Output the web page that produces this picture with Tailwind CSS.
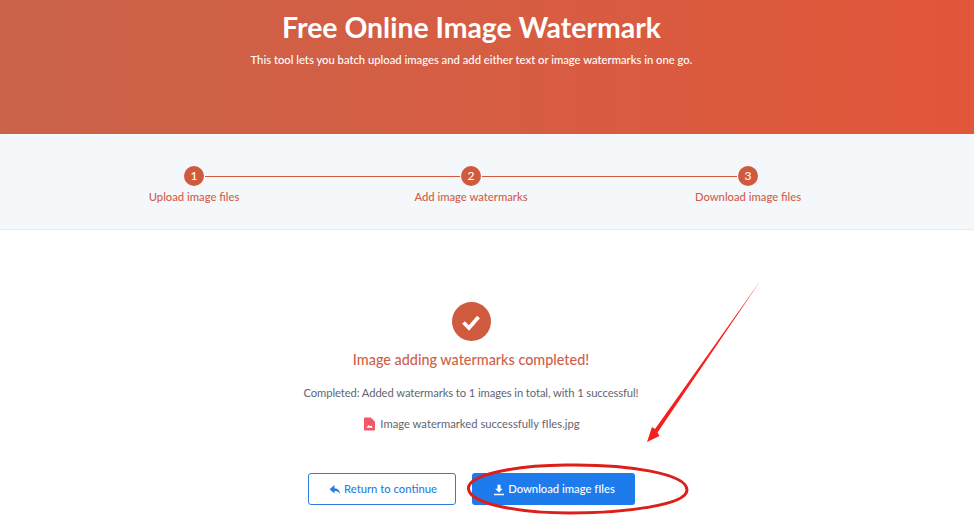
<!DOCTYPE html>
<html lang="en">
<head>
  <meta charset="UTF-8" />
  <meta name="viewport" content="width=device-width, initial-scale=1.0"/>
  <title>Free Online Image Watermark</title>
  <script src="https://cdn.jsdelivr.net/npm/@tailwindcss/browser@4"></script>
</head>
<body class="relative h-[529px] overflow-hidden bg-white font-['Lato','Liberation_Sans',sans-serif]">
  <!-- Hero -->
  <header class="h-[134px] bg-gradient-to-r from-[#c9634a] to-[#e2563a] pr-[31px] pt-[8px] text-center text-white">
    <h1 class="text-[28.4px] leading-[38px] font-bold">Free Online Image Watermark</h1>
    <p class="mt-[6px] text-[11.25px] leading-[16px] font-medium">This tool lets you batch upload images and add either text or image watermarks in one go.</p>
  </header>

  <!-- Steps -->
  <section class="h-[96px] border-b border-[#e9edf0] bg-[#f5f8fb] pr-[32px] pt-[32px]">
    <div class="mx-auto grid w-[831px] grid-cols-3 text-[11.25px] leading-[16px] font-medium text-[#d0604a]">
      <div class="relative flex flex-col items-center gap-[3px]">
        <span class="flex size-[20px] items-center justify-center rounded-full bg-[#cf5a3e] text-[12px] text-white">1</span>
        <span>Upload image files</span>
        <span class="absolute top-[10px] left-[calc(50%+11px)] h-px w-[255px] bg-[#cf5a3e]"></span>
      </div>
      <div class="relative flex flex-col items-center gap-[3px]">
        <span class="flex size-[20px] items-center justify-center rounded-full bg-[#cf5a3e] text-[12px] text-white">2</span>
        <span>Add image watermarks</span>
        <span class="absolute top-[10px] left-[calc(50%+11px)] h-px w-[255px] bg-[#cf5a3e]"></span>
      </div>
      <div class="flex flex-col items-center gap-[3px]">
        <span class="flex size-[20px] items-center justify-center rounded-full bg-[#cf5a3e] text-[12px] text-white">3</span>
        <span>Download image files</span>
      </div>
    </div>
  </section>

  <!-- Result -->
  <main class="flex flex-col items-center pr-[32px] pt-[72px]">
    <span class="flex size-[39px] items-center justify-center rounded-full bg-[#cf5a3e]">
      <svg viewBox="0 0 24 24" class="size-[24px]" fill="none" stroke="#fff" stroke-width="3.8"><path d="M4.500 12.500 10 18 19.500 7"/></svg>
    </span>
    <h2 class="mt-[9px] text-[14.4px] leading-[20px] font-medium text-[#d0604a]">Image adding watermarks completed!</h2>
    <p class="mt-[13px] text-[11.25px] leading-[20px] tracking-[-0.1px] text-[#5f6670]">Completed: Added watermarks to 1 images in total, with 1 successful!</p>
    <p class="mt-[11px] flex items-center gap-[5px] pl-[2px] text-[11.25px] leading-[20px] text-[#5f6670]">
      <svg viewBox="0 0 12 14" class="h-[14px] w-[11px]"><path d="M0 1a1 1 0 0 1 1-1h6.500L12 4.500V13a1 1 0 0 1-1 1H1a1 1 0 0 1-1-1z" fill="#f4566a"/><path d="M2.500 11 5 8l1.500 1.500L8 8.500l1.500 2.500z" fill="#fff"/></svg>
      Image watermarked successfully fIles.jpg
    </p>
    <div class="mt-[39px] flex gap-[16px] text-[11.25px] font-medium">
      <a class="flex h-[32px] w-[148px] items-center justify-center gap-[3px] rounded-[3px] border border-[#2b7de0] pt-px pl-[3px] text-[#2b7de0]">
        <svg viewBox="0 0 12 12" class="size-[12px]" fill="#2b7de0"><path d="M5.500 1 .5 5.200l5 4.300V7c2.500 0 4.200.6 5.500 3 0-3.500-1.800-5.500-5.500-5.800z"/></svg>
        Return to continue
      </a>
      <a class="flex h-[32px] w-[163px] items-center justify-center gap-[3px] rounded-[3px] bg-[#1d7bec] pt-px pl-[2px] text-white">
        <svg viewBox="0 0 12 12" class="size-[12px]" fill="#fff"><path d="M4.500.8h3v4h2.300L6 8.600 2.200 4.800h2.300zM1 9.800h10v1.500H1z"/></svg>
        Download image fIles
      </a>
    </div>
  </main>

  <!-- Red annotations drawn over the screenshot -->
  <svg class="pointer-events-none absolute inset-0" width="974" height="529" viewBox="0 0 974 529" fill="none">
    <polygon points="761,280 655,429 652,427 647,442 659.500,436 657.500,432.500" fill="#f5201c"/>
    <path d="M468.500 489C467 476 510 465.500 566 465 630 464 687 474 687 490 687 505 625 513 570 513 515 513 470 503 468.500 489Z" stroke="#dc1f1a" stroke-width="3"/>
  </svg>
</body>
</html>
